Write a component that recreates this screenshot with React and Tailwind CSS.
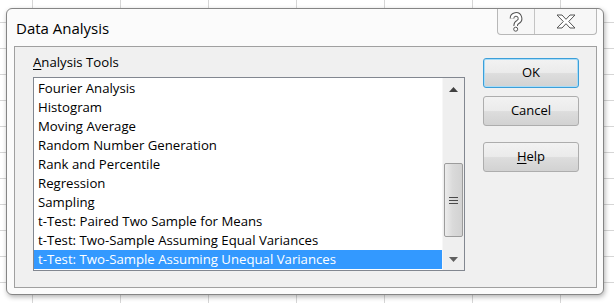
import React from 'react';

const tools = [
  'Fourier Analysis',
  'Histogram',
  'Moving Average',
  'Random Number Generation',
  'Rank and Percentile',
  'Regression',
  'Sampling',
  't-Test: Paired Two Sample for Means',
  't-Test: Two-Sample Assuming Equal Variances',
  't-Test: Two-Sample Assuming Unequal Variances',
];

function DlgButton({ children, focused }) {
  return (
    <button
      className={
        'w-[96px] h-[30px] rounded-[3px] border text-[13px] text-black flex items-center justify-center ' +
        'bg-[linear-gradient(to_bottom,#f2f2f2_0%,#ebebeb_48%,#dddddd_52%,#d2d2d2_100%)] ' +
        (focused
          ? 'border-[#3c9fd9] shadow-[inset_0_0_0_1px_#a8dcf7]'
          : 'border-[#adadad]')
      }
    >
      {children}
    </button>
  );
}

function Arrow({ down }) {
  return (
    <svg width="9" height="5" viewBox="0 0 9 5">
      {down ? (
        <polygon points="0,0 9,0 4.5,5" fill="#606060" />
      ) : (
        <polygon points="0,5 9,5 4.5,0" fill="#404040" />
      )}
    </svg>
  );
}

export default function App() {
  return (
    <div className="w-[614px] h-[303px] overflow-hidden pt-[8px] pl-[6px] bg-white bg-[linear-gradient(to_right,#d6d6d6_1px,transparent_1px),linear-gradient(to_bottom,#d6d6d6_1px,transparent_1px)] bg-size-[88px_26px] bg-position-[32px_22px] font-['Open_Sans',sans-serif]">
      <div className="w-[598px] h-[287px] rounded-[6px] border border-[#858585] bg-[#fbfbfb] shadow-[1px_2px_5px_rgba(0,0,0,0.3)] flex flex-col">
        {/* title bar */}
        <div className="h-[37px] flex">
          <div className="pl-[9px] pt-[9px] text-[15px] leading-[20px] text-black">Data Analysis</div>
          <div className="ml-auto mr-[6px] h-[26px] flex border-x border-b border-[#b8b8b8] rounded-b-[4px] bg-[#f7f7f7]">
            <div className="w-[37px] flex items-center justify-center border-r border-[#c4c4c4]">
              <svg width="16" height="20" viewBox="0 0 16 20">
                <path d="M4 6.5 a4 4 0 1 1 6 3.4 q-2.3 1.3 -2.3 3.3 v0.8" fill="none" stroke="#555" strokeWidth="4.6" strokeLinecap="butt" />
                <path d="M4 6.5 a4 4 0 1 1 6 3.4 q-2.3 1.3 -2.3 3.3 v0.8" fill="none" stroke="#fff" strokeWidth="2.6" strokeLinecap="butt" />
                <circle cx="7.7" cy="17.2" r="2" fill="#fff" stroke="#555" strokeWidth="1" />
              </svg>
            </div>
            <div className="w-[61px] flex items-center justify-center">
              <svg width="20" height="15" viewBox="0 0 20 15">
                <polygon
                  points="1,1 6,1 10,5.3 14,1 19,1 12.7,7.5 19,14 14,14 10,9.7 6,14 1,14 7.3,7.5"
                  fill="#fff"
                  stroke="#555"
                  strokeWidth="1"
                  strokeLinejoin="miter"
                />
              </svg>
            </div>
          </div>
        </div>

        {/* client area */}
        <div className="ml-[7px] mr-[6px] h-[242px] border border-[#a0a0a0] bg-[#f0f0f0] flex text-[13.2px] text-black">
          <div className="pl-[18px] pt-[6px]">
            <div className="h-[18px] leading-[18px]">
              <span className="underline underline-offset-2">A</span>nalysis Tools
            </div>
            <div className="mt-[6px] w-[432px] h-[194px] border border-[#828790] bg-white flex">
              <div className="flex-1 pt-[1px]">
                {tools.map((t, i) => (
                  <div
                    key={i}
                    className={
                      'h-[19px] leading-[19px] pl-[4px] whitespace-nowrap ' +
                      (i === tools.length - 1 ? 'bg-[#3399ff] text-white' : '')
                    }
                  >
                    {t}
                  </div>
                ))}
              </div>
              <div className="w-[22px] bg-[#efefef] border-l border-[#f7f7f7] flex flex-col">
                <div className="h-[21px] flex items-center justify-center pt-[2px]">
                  <Arrow />
                </div>
                <div className="h-[64px]" />
                <div className="h-[74px] mx-[1px] border border-[#9c9c9c] rounded-[2px] bg-[linear-gradient(to_right,#ececec,#dadada_45%,#d2d2d2)] flex flex-col items-center justify-center gap-[2px]">
                  <div className="w-[9px] h-px bg-[#4a4a4a]" />
                  <div className="w-[9px] h-px bg-[#4a4a4a]" />
                  <div className="w-[9px] h-px bg-[#4a4a4a]" />
                </div>
                <div className="flex-1" />
                <div className="h-[21px] flex items-center justify-center">
                  <Arrow down />
                </div>
              </div>
            </div>
          </div>
          <div className="ml-[18px] mt-[11px] flex flex-col">
            <DlgButton focused>OK</DlgButton>
            <div className="mt-[8px]">
              <DlgButton>Cancel</DlgButton>
            </div>
            <div className="mt-[16px]">
              <DlgButton>
                <span>
                  <span className="underline underline-offset-2">H</span>elp
                </span>
              </DlgButton>
            </div>
          </div>
        </div>
      </div>
    </div>
  );
}
